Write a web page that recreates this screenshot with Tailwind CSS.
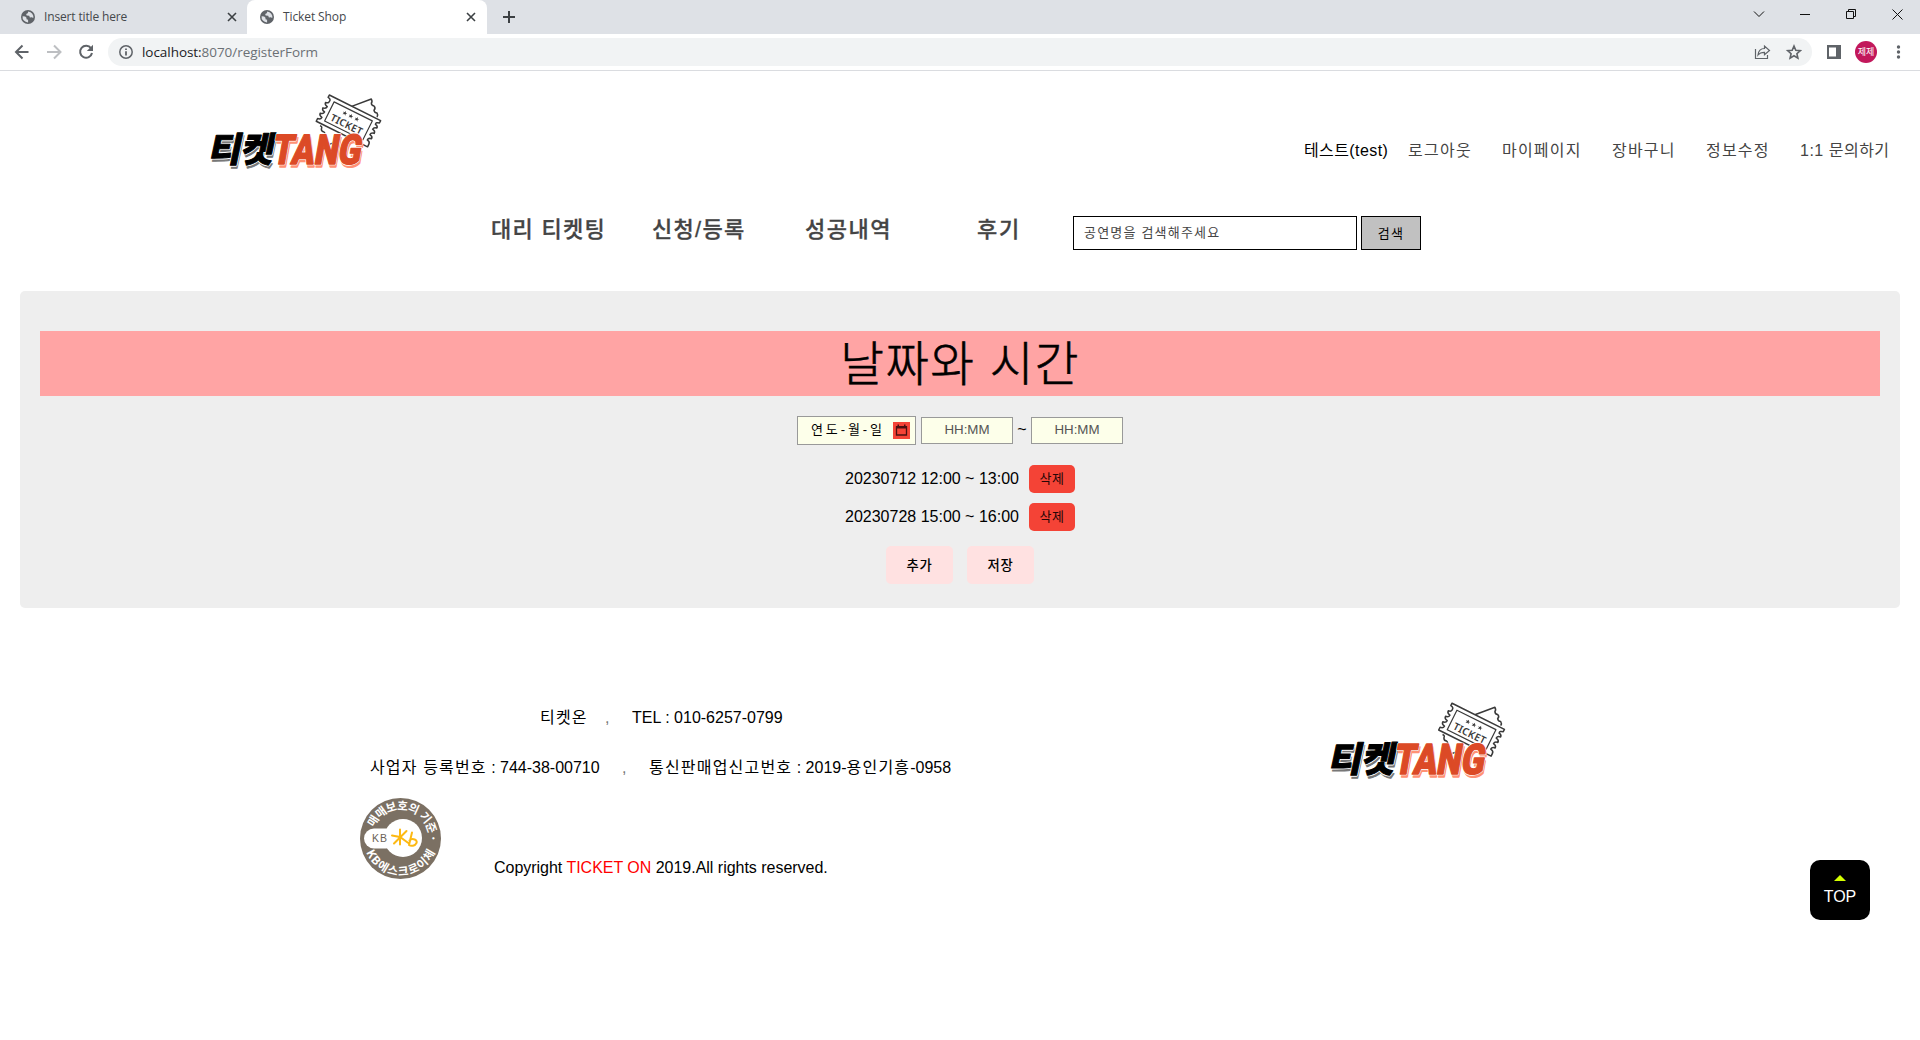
<!DOCTYPE html>
<html lang="ko">
<head>
<meta charset="utf-8">
<title>Ticket Shop</title>
<script src="https://cdn.jsdelivr.net/npm/@tailwindcss/browser@4"></script>
</head>
<body class="w-[1920px] h-[1040px] overflow-hidden bg-white text-black font-['Liberation_Sans','Noto_Sans_CJK_KR',sans-serif]">
<svg class="hidden">
  <defs>
    <symbol id="globe" viewBox="0 0 14 14"><circle cx="7" cy="7" r="7" fill="#5f6368"/><path d="M1.6 6.2l2.600.300 1.300 1.300v1.400l1.600.600v2.600A5.400 5.400 0 0 1 1.600 6.200zM7.300 1.600l-.600 1.600-1.500.700.400 1.500 2.600.400.700 1.700 1.900-.200 1.500.800A5.500 5.500 0 0 0 7.300 1.600z" fill="#dee1e6"/></symbol>
    <symbol id="x" viewBox="0 0 10 10"><path d="M1 1l8 8M9 1L1 9" stroke="#3c4043" stroke-width="1.600" fill="none"/></symbol>
    <symbol id="logo" viewBox="0 0 570 285">
      <g fill="none" stroke="#3a3a3a" stroke-width="4.500" stroke-linejoin="round">
        <path d="M455 64L514 42q4 8 0 12q0 8 8 9q6 6 0 13q2 8 9 8q4 6 0 12M360 122q8 3 4 10q0 8 8 9q6 5 0 12M388 178l14-5"/>
        <g transform="translate(388 30) rotate(26.500)">
          <path fill="#fff" d="M0 0H172V8q-11 2-9 9q9 1 9 8q-10 1-10 9q10 1 10 9q-10 1-10 9q10 1 10 9q-10 1-10 9q10 1 10 9V88H0V79q10-1 10-9q-10-1-10-9q10-1 10-9q-10-1-10-9q10-1 10-9q-10-1-10-9q10-1 9-9q1-7-9-8Z"/>
          <path stroke-width="3.500" d="M22 12H150V76H22Z"/>
        </g>
      </g>
      <g transform="translate(388 30) rotate(26.500)" fill="#3a3a3a">
        <text x="34" y="67" font-family="Noto Sans" font-size="30" font-weight="600" textLength="103">TICKET</text>
        <path d="M66 21l2 5h5l-4 3 2 5-5-3-5 3 2-5-4-3h5zM86 21l2 5h5l-4 3 2 5-5-3-5 3 2-5-4-3h5zM106 21l2 5h5l-4 3 2 5-5-3-5 3 2-5-4-3h5z"/>
      </g>
      <g font-weight="900" stroke-linejoin="round" font-family="'Noto Sans CJK KR'">
        <g transform="translate(23 231) skewX(-12)" font-size="104">
          <text x="5" y="9" fill="#777" stroke="#777" stroke-width="3" textLength="194" lengthAdjust="spacingAndGlyphs">티켓</text>
          <text x="0" y="0" fill="#fff" stroke="#fff" stroke-width="8" textLength="194" lengthAdjust="spacingAndGlyphs">티켓</text>
          <text x="0" y="0" fill="#000" stroke="#000" stroke-width="3" textLength="194" lengthAdjust="spacingAndGlyphs">티켓</text>
        </g>
        <g transform="translate(213 238) skewX(-10)" font-size="124" font-family="Roboto">
          <text x="5" y="9" fill="#ff9275" stroke="#ff9275" stroke-width="4" textLength="266" lengthAdjust="spacingAndGlyphs">TANG</text>
          <text x="0" y="0" fill="#fff" stroke="#fff" stroke-width="8" textLength="266" lengthAdjust="spacingAndGlyphs">TANG</text>
          <text x="0" y="0" fill="#dc4a26" stroke="#dc4a26" stroke-width="4" textLength="266" lengthAdjust="spacingAndGlyphs">TANG</text>
        </g>
      </g>
    </symbol>
  </defs>
</svg>

<!-- Browser tabs -->
<div class="h-[34px] bg-[#dee1e6] flex items-center text-[12px] text-[#45484c] font-['Open_Sans',sans-serif]">
  <div class="w-[247px] h-full flex items-center pl-[21px] pb-px">
    <svg class="size-[14px] mr-[9px]"><use href="#globe"/></svg>
    <span class="w-[183px] tracking-[-0.150px] whitespace-nowrap">Insert title here</span>
    <svg class="size-[10px]"><use href="#x"/></svg>
  </div>
  <div class="w-[240px] h-full bg-white rounded-t-lg flex items-center pl-[13px] pb-px">
    <svg class="size-[14px] mr-[9px]"><use href="#globe"/></svg>
    <span class="w-[183px] tracking-[-0.100px] whitespace-nowrap">Ticket Shop</span>
    <svg class="size-[10px]"><use href="#x"/></svg>
  </div>
  <svg class="w-[24px] h-[14px] ml-[10px]" viewBox="0 0 24 14"><path d="M12 1v12M6 7h12" stroke="#3c4043" stroke-width="2"/></svg>
  <svg class="ml-auto w-[170px] h-[28px] mb-[6px]" viewBox="0 0 170 28" fill="none" stroke="#111" stroke-width="1"><path d="M4 11.500l5 5 5-5M50 14.500h10M96.500 11.500h7v7h-7zM98.500 11v-1.500h7v7H104M142.500 9.500l10 10M152.500 9.500l-10 10"/></svg>
</div>
<!-- Address bar -->
<div class="h-[37px] border-b border-[#dadce0] flex items-center">
  <svg class="w-[108px] h-[36px] shrink-0" viewBox="0 0 108 36" fill="none" stroke-width="2"><path d="M28.500 18H16.500M22.500 11.500L16 18l6.500 6.500" stroke="#5f6368"/><path d="M47 18h12M54 11.500l6.500 6.500-6.500 6.500" stroke="#bdbfc2"/><path d="M91 14.200A6 6 0 1 0 92 19" stroke="#5f6368"/><path d="M93 10.800v6.200h-6.200z" fill="#5f6368"/></svg>
  <div class="w-[1704px] h-[28px] rounded-full bg-[#f1f3f4] flex items-center pl-[11px] pr-[10px] text-[13.500px] font-['Open_Sans',sans-serif]">
    <svg class="size-[14px] mr-[9px]" viewBox="0 0 14 14" fill="none" stroke="#5f6368" stroke-width="1.500"><circle cx="7" cy="7" r="6.200"/><path d="M7 6.200v4.300M7 3.500v1.500" stroke-width="1.800"/></svg>
    <span class="text-[#202124] pt-px tracking-[-0.050px]">localhost:</span><span class="text-[#6b7075] pt-px tracking-[-0.050px]">8070/registerForm</span>
    <svg class="ml-auto w-[50px] h-[18px]" viewBox="0 0 50 18" fill="none" stroke="#5f6368" stroke-width="1.200"><path d="M3.500 6v9.500h12V12M6 12c.5-4.500 3-6.500 6.500-6.500V3l5 4.500-5 4.300V9.300C9.500 9.300 7.500 10 6 12z"/><path d="M42 3l1.800 4.300 4.500.4-3.400 3 1 4.500L42 12.800l-3.900 2.400 1-4.500-3.400-3 4.500-.4z" stroke-width="1.600"/></svg>
  </div>
  <svg class="w-[108px] h-[36px]" viewBox="0 0 108 36"><path d="M15 11h14v14H15zM17 13.500v9h7v-9z" fill-rule="evenodd" fill="#5f6368"/><circle cx="54" cy="18" r="11" fill="#c2185b"/><text x="54" y="21" text-anchor="middle" font-size="9" fill="#fff" font-family="'Noto Sans CJK KR'">제제</text><g fill="#5f6368"><circle cx="86.500" cy="13" r="1.700"/><circle cx="86.500" cy="18" r="1.700"/><circle cx="86.500" cy="23" r="1.700"/></g></svg>
</div>

<!-- Site header -->
<header class="h-[220px] pt-[14px]">
  <div class="flex h-[95px] pl-[200px]">
    <svg class="w-[190px] h-[95px] shrink-0"><use href="#logo"/></svg>
    <div class="flex ml-[914px] pt-[54px] text-[16px] leading-6 whitespace-nowrap text-[#444]">
      <span class="w-[104px] text-black tracking-[0.400px]">테스트(test)</span>
      <span class="w-[94px] tracking-[1.300px]">로그아웃</span>
      <span class="w-[110px] tracking-[1.200px]">마이페이지</span>
      <span class="w-[94px] tracking-[1.200px]">장바구니</span>
      <span class="w-[94px] tracking-[1.200px]">정보수정</span>
      <span class="tracking-[0.500px]">1:1 문의하기</span>
    </div>
  </div>
  <div class="flex items-start mt-[36px] pl-[491px] text-[22px] leading-7 whitespace-nowrap text-[#444]">
    <span class="w-[161px] tracking-[1.300px] font-medium [-webkit-text-stroke:0.300px_#444]">대리 티켓팅</span>
    <span class="w-[153px] tracking-[1.300px] font-medium [-webkit-text-stroke:0.300px_#444]">신청/등록</span>
    <span class="w-[171px] tracking-[1.500px] font-medium [-webkit-text-stroke:0.300px_#444]">성공내역</span>
    <span class="w-[97px] tracking-[1.800px] pl-px font-medium [-webkit-text-stroke:0.300px_#444]">후기</span>
    <div class="w-[284px] h-[34px] border border-black pl-[10px] text-[13px] leading-8 tracking-[1.200px]">공연명을 검색해주세요</div>
    <div class="w-[60px] h-[34px] ml-1 border border-black bg-[#c1c1c1] text-black text-center text-[13px] leading-[33px] tracking-[1.200px]">검색</div>
  </div>
</header>

<!-- Schedule form -->
<main class="mx-5 h-[317px] rounded-[5px] bg-[#eee] px-5 pt-10 flex flex-col items-center">
  <h1 class="w-full h-[65px] bg-[#ffa4a4] text-center text-[47.500px] leading-[59px] font-['Noto_Sans_CJK_KR'] font-light tracking-[1.300px] [-webkit-text-stroke:0.600px_#000]">날짜와 시간</h1>
  <div class="flex items-center h-[29px] mt-5 text-[13.333px]">
    <div class="w-[119px] h-[29px] border border-[#999] bg-[#fdffea] flex items-center pl-[13px]"><span class="w-[82px] pb-[2px] text-[13px] tracking-[2.900px] whitespace-nowrap">연도-월-일</span><svg class="size-[17px]" viewBox="0 0 17 17"><path d="M0 0h17v17H0z" fill="#f44336"/><path d="M3.500 5h10v8h-10z" fill="none" stroke="#4a1010" stroke-width="1.300"/><path d="M3 4h11v2.500H3zM4.500 2.500H6V4H4.500zM11 2.500h1.500V4H11z" fill="#4a1010"/></svg></div>
    <div class="w-[92px] h-[27px] ml-[5px] border border-[#999] bg-[#fdffea] text-[#555] text-center leading-[24px]">HH:MM</div>
    <span class="w-[18px] text-center text-[16px] pb-[2px]">~</span>
    <div class="w-[92px] h-[27px] border border-[#999] bg-[#fdffea] text-[#555] text-center leading-[24px]">HH:MM</div>
  </div>
  <div class="flex items-center h-[28px] mt-[20px] text-[16px]"><span class="w-[184px] whitespace-nowrap">20230712 12:00 ~ 13:00</span><div class="w-[46px] h-[28px] rounded-[5px] bg-[#f44336] text-[#250606] text-center text-[13px] leading-[28px] tracking-[0.500px]">삭제</div></div>
  <div class="flex items-center h-[28px] mt-[10px] text-[16px]"><span class="w-[184px] whitespace-nowrap">20230728 15:00 ~ 16:00</span><div class="w-[46px] h-[28px] rounded-[5px] bg-[#f44336] text-[#250606] text-center text-[13px] leading-[28px] tracking-[0.500px]">삭제</div></div>
  <div class="flex gap-[14px] mt-[15px] text-[13.333px] font-medium leading-[39px] text-center">
    <div class="w-[67px] h-[38px] rounded-[5px] bg-[#ffe1e1] tracking-[0.700px]">추가</div>
    <div class="w-[67px] h-[38px] rounded-[5px] bg-[#ffe1e1] tracking-[0.700px]">저장</div>
  </div>
</main>

<!-- Footer -->
<footer class="flex items-start pl-[360px] pt-[85px] h-[432px] text-[16px] whitespace-nowrap">
  <div class="w-[960px]">
    <div class="flex h-[50px] items-center pl-[180px]"><span class="w-[65px] tracking-[1.200px]">티켓온</span><span class="w-[27px] text-[#777]">,</span><span>TEL : 010-6257-0799</span></div>
    <div class="flex h-[50px] items-center pl-[10px]"><span class="w-[252px]"><span class="tracking-[1.150px]">사업자 등록번호</span> : 744-38-00710</span><span class="w-[27px] text-[#777]">,</span><span><span class="tracking-[1.200px]">통신판매업신고번호</span> : 2019-<span class="tracking-[1.200px]">용인기흥</span>-0958</span></div>
    <div class="flex items-end h-[86px]">
      <svg class="w-[81px] h-[81px]" viewBox="0 0 81 81">
        <defs><path id="arcTop" d="M12 40.500a28.500 28.500 0 0 1 57 0"/><path id="arcBottom" d="M3.500 40.500a37 37 0 0 0 74 0"/></defs>
        <circle cx="40.500" cy="40.500" r="40.500" fill="#7b7063"/>
        <circle cx="43" cy="40" r="19" fill="#fff"/><rect x="4" y="30.500" width="32" height="20" rx="10" fill="#fff"/>
        <text x="12" y="44" font-family="Liberation Sans" font-size="10.500" fill="#6b6258" textLength="15">KB</text>
        <path d="M40 31.500V46.500M46.500 33L34 45.500M32 37.500l8 1.500 9 6.500M52 34.500l-3 12.500M49.500 42.500c3-3 8.500-.5 7 2.500s-5.500 3.500-7.500 2" fill="none" stroke="#fdb913" stroke-width="2" stroke-linecap="round"/>
        <g fill="#fff" font-family="'Noto Sans CJK KR'" font-weight="700" font-size="11.500"><text transform="rotate(4 40.500 40.500)"><textPath href="#arcTop" startOffset="9" textLength="80">매매보호의 기준 ·</textPath></text><text><textPath href="#arcBottom" startOffset="14" textLength="88">KB에스크로이체</textPath></text></g>
      </svg>
      <div class="ml-[53px] leading-6 -mb-px tracking-[-0.020px]">Copyright <span class="text-[#f00]">TICKET ON</span> 2019.All rights reserved.</div>
    </div>
  </div>
  <svg class="w-[194px] h-[97px]"><use href="#logo"/></svg>
  <div class="w-[60px] h-[60px] ml-[296px] mt-[167px] rounded-[10px] bg-black text-white flex flex-col items-center pt-[15px]">
    <svg class="w-3 h-[6px]" viewBox="0 0 12 6"><path d="M0 6l6-6 6 6z" fill="#d4ff00"/></svg>
    <span class="leading-5 mt-[6px]">TOP</span>
  </div>
</footer>
</body>
</html>
